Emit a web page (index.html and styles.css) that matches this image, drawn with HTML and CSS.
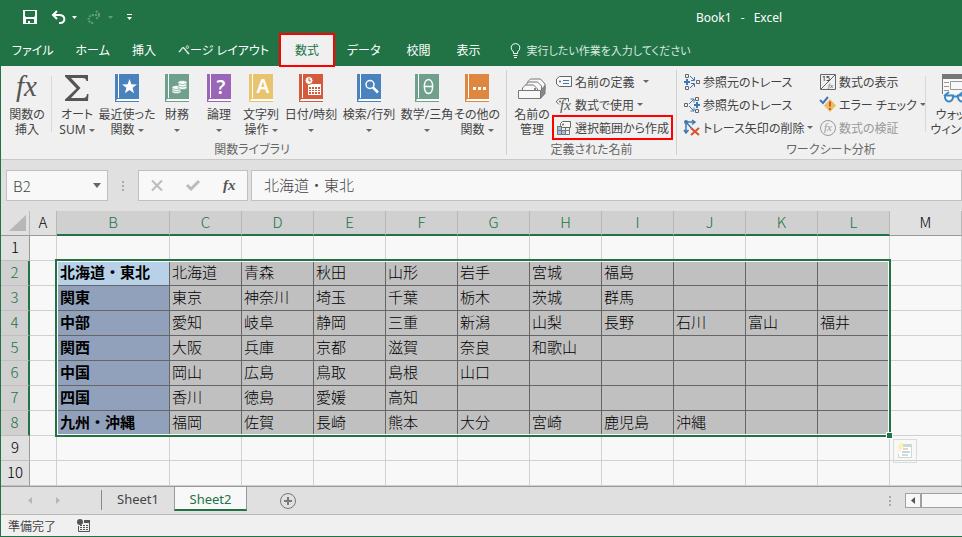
FILE: index.html
```html
<!DOCTYPE html>
<html lang="ja">
<head>
  <meta charset="UTF-8" />
  <meta name="viewport" content="width=device-width, initial-scale=1.0" />
  <title>Book1 - Excel</title>
  <link rel="stylesheet" href="styles.css">
</head>
<body>
<svg class="defs" width="0" height="0">
  <symbol id="book" viewBox="0 0 24 28">
    <path d="M0 0h24v25H0z" fill="currentColor"/>
    <path d="M3 0h1v24H3z" fill="#fff"/>
    <path d="M0 24v4h24v-1.500H2.500q-1.200-1 1-1.500H24V24z" fill="currentColor"/>
    <path d="M2 25h22v2H1z" fill="#fff"/>
  </symbol>
</svg>

<div class="window">
  <header class="titlebar">
    <div class="quick">
      <button aria-label="上書き保存"><svg width="14" height="14" viewBox="0 0 14 14"><path fill="#fff" fill-rule="evenodd" d="M0 0h14v14H0zM2 1v5l1 1h8l1-1V1zM3 9v4h2v-2h2v2h4V9z"/></svg></button>
      <button aria-label="元に戻す"><svg width="15" height="14" viewBox="0 0 15 14"><path fill="none" stroke="#fff" stroke-width="2" d="M6 1L2 5l4 4M2 5h6c7 0 7 8 1 8H8"/></svg></button>
      <button aria-label="元に戻す一覧"><svg width="5" height="3" viewBox="0 0 5 3"><path fill="#fff" d="M0 0h5L2.500 3z"/></svg></button>
      <button class="dim" aria-label="やり直し"><svg width="15" height="14" viewBox="0 0 15 14"><path fill="none" stroke="#fff" stroke-width="2" stroke-dasharray="2 1" d="M9 1l4 4-4 4M13 5H7c-7 0-7 8-1 8h1"/></svg></button>
      <button class="dim" aria-label="やり直し一覧"><svg width="5" height="3" viewBox="0 0 5 3"><path fill="#fff" d="M0 0h5L2.500 3z"/></svg></button>
      <button class="more" aria-label="カスタマイズ"><svg width="5" height="6" viewBox="0 0 5 6"><path fill="#fff" d="M0 0h5v1H0zM0 3h5L2.500 6z"/></svg></button>
    </div>
    <h1 class="title">Book1&ensp;&nbsp;-&ensp;&nbsp;Excel</h1>
  </header>

  <nav class="tabs">
    <a href="#">ファイル</a>
    <a href="#">ホーム</a>
    <a href="#">挿入</a>
    <a href="#">ページ レイアウト</a>
    <a href="#" class="active">数式</a>
    <a href="#">データ</a>
    <a href="#">校閲</a>
    <a href="#">表示</a>
    <a href="#" class="tell"><svg width="11" height="15" viewBox="0 0 11 15"><path fill="none" stroke="#fff" d="M3.500 10.500V9L1.500 6.500q-1.500-5 4-6 5.500 1 4 6L7.500 9v1.500zM3.500 12.500h4M4 14.500h3"/></svg>実行したい作業を入力してください</a>
  </nav>

  <section class="ribbon">
    <div class="group">
      <div class="tools">
        <button class="big"><svg width="26" height="28" viewBox="0 0 26 28"><text x="2" y="22" class="fx">fx</text></svg><span>関数の<br>挿入</span></button>
        <i class="rule"></i>
        <button class="big"><svg width="26" height="28" viewBox="0 0 26 28"><path fill="#555" d="M1 1h23v6h-1.500q-.5-3-4-3H7l9.500 10L7 24h12.500q3 0 3.500-4h1.500L24 27H1v-1.500L12.500 14.500 1 2.500z"/></svg><span>オート<br>SUM <b class="arrow"></b></span></button>
        <button class="big wide"><svg class="blue" width="24" height="28" viewBox="0 0 24 28"><use href="#book"/><path fill="#fff" d="M14.500 5l1.900 5.200 5.600.2-4.400 3.400 1.500 5.400-4.600-3.100-4.600 3.100 1.500-5.400L7 10.400l5.600-.2z"/></svg><span>最近使った<br>関数 <b class="arrow"></b></span></button>
        <button class="big"><svg class="green" width="24" height="28" viewBox="0 0 24 28"><use href="#book"/><g fill="#fff" stroke="#6fa08c" stroke-width=".7"><ellipse cx="11.500" cy="17.500" rx="4.500" ry="2"/><ellipse cx="11.500" cy="15.500" rx="4.500" ry="2"/><ellipse cx="11.500" cy="13.500" rx="4.500" ry="2"/><ellipse cx="17.500" cy="13.500" rx="4.500" ry="2"/><ellipse cx="17.500" cy="11" rx="4.500" ry="2"/><ellipse cx="17.500" cy="8.500" rx="4.500" ry="2"/></g></svg><span>財務<br><b class="arrow"></b></span></button>
        <button class="big"><svg class="purple" width="24" height="28" viewBox="0 0 24 28"><use href="#book"/><text x="14" y="20" class="glyph">?</text></svg><span>論理<br><b class="arrow"></b></span></button>
        <button class="big"><svg class="yellow" width="24" height="28" viewBox="0 0 24 28"><use href="#book"/><text x="14" y="19" class="glyph">A</text></svg><span>文字列<br>操作 <b class="arrow"></b></span></button>
        <button class="big wide"><svg class="red" width="24" height="28" viewBox="0 0 24 28"><use href="#book"/><path fill="#fff" d="M9 10h13v11H9z"/><path fill="#d35b3c" d="M10 13h2v2h-2zM13 13h2v2h-2zM16 13h2v2h-2zM19 13h2v2h-2zM10 16h2v1h-2zM13 16h2v1h-2zM16 16h2v1h-2zM19 16h2v1h-2zM10 18h2v2h-2zM13 18h2v2h-2zM16 18h2v2h-2zM19 18h2v2h-2z"/><circle cx="10" cy="6.500" r="4" fill="#fff" stroke="#d35b3c"/><path fill="none" stroke="#d35b3c" d="M10 4v3h2"/></svg><span>日付/時刻<br><b class="arrow"></b></span></button>
        <button class="big wide"><svg class="blue" width="24" height="28" viewBox="0 0 24 28"><use href="#book"/><circle cx="13" cy="10.500" r="4" fill="none" stroke="#fff" stroke-width="1.500"/><path stroke="#fff" stroke-width="2.500" d="M16 13.500l5 5"/></svg><span>検索/行列<br><b class="arrow"></b></span></button>
        <button class="big wide"><svg class="green" width="24" height="28" viewBox="0 0 24 28"><use href="#book"/><path fill="none" stroke="#fff" stroke-width="1.500" d="M13.500 5.500c-5.500 0-5.500 14 0 14s5.500-14 0-14zM9.500 12.500h8"/></svg><span>数学/三角<br><b class="arrow"></b></span></button>
        <button class="big"><svg class="orange" width="24" height="28" viewBox="0 0 24 28"><use href="#book"/><path fill="#fff" d="M8 13h3v3H8zM13 13h3v3h-3zM18 13h3v3h-3z"/></svg><span>その他の<br>関数 <b class="arrow"></b></span></button>
      </div>
      <div class="caption">関数ライブラリ</div>
    </div>

    <div class="group names">
      <div class="tools">
        <button class="big"><svg width="28" height="28" viewBox="0 0 28 28"><g fill="#f8f8f8" stroke="#777"><path d="M9.500 16V8l3-3h10l4.500 5v5l-4 4"/><path d="M7.500 17v-6l3-3h9l4 4v5"/><path d="M4.500 17v-3l3-3h8l4 4v3"/><path d="M.5 16.500h22v8H.5z"/><path fill="#888" d="M22.500 16.500l4.500-5v8l-4.500 5z"/></g><circle cx="17" cy="15" r="1" fill="#666"/></svg><span>名前の<br>管理</span></button>
        <div class="list">
          <button class="row"><svg width="16" height="16" viewBox="0 0 16 16"><path fill="#f8f8f8" stroke="#666" d="M3.500 2.500h12v10h-12L.5 10V5z"/><circle cx="4" cy="7.500" r="1" fill="#666"/><path stroke="#3e78b3" d="M7 6.500h6M7 9.500h6"/></svg>名前の定義<b class="arrow far"></b></button>
          <button class="row"><svg width="16" height="16" viewBox="0 0 16 16"><path fill="none" stroke="#666" d="M3 7.500L.5 5V4l3-2.500h9v3"/><circle cx="4" cy="4.500" r="1" fill="#666"/><text x="4" y="13" class="fx small">fx</text></svg>数式で使用<b class="arrow"></b></button>
          <button class="row marked"><svg width="16" height="16" viewBox="0 0 16 16"><path fill="#9dc3e6" d="M1 6h4v9H1zM5 11h4v4H5z"/><path fill="none" stroke="#777" d="M1.500 6.500h4M1.500 6v8.500h12V8M1 10.500h12M5.500 7v7M9.500 7v7"/><path fill="#f8f8f8" stroke="#666" d="M6.500 1.500h8v6h-8l-2-2v-2z"/><circle cx="7" cy="4.500" r="1" fill="#666"/></svg>選択範囲から作成</button>
        </div>
      </div>
      <div class="caption">定義された名前</div>
    </div>

    <div class="group audit">
      <div class="tools">
        <div class="list traces">
          <button class="row"><svg width="16" height="16" viewBox="0 0 16 16"><path fill="none" stroke="#666" d="M1.500.5h3v3h-3zM1.500 12.500h3v3h-3zM12.500 6.500h3v3h-3z"/><path fill="none" stroke="#3e78b3" stroke-width="2" d="M0 8h6M3 5v6"/><path fill="none" stroke="#3e78b3" d="M6 2l4 4M10.500 3v3.500H7M6 14l4-4M7 9.500h3.500V13"/></svg>参照元のトレース</button>
          <button class="row"><svg width="16" height="16" viewBox="0 0 16 16"><path fill="none" stroke="#666" d="M11.500.5h3v3h-3zM11.500 12.500h3v3h-3zM.5 6.500h3v3h-3z"/><path fill="none" stroke="#3e78b3" stroke-width="2" d="M10 8h6M13 5v6"/><path fill="none" stroke="#3e78b3" d="M5 7l5-5M6.500 2H10v3.500M5 9l5 5M10 10.500V14H6.500"/></svg>参照先のトレース</button>
          <button class="row"><svg width="16" height="16" viewBox="0 0 16 16"><path fill="none" stroke="#3e78b3" stroke-width="1.500" d="M2 2h8M8 0l3 2-3 2.500M2 2v10M0 10l2 3 2.500-3M2 2l8 9"/><circle cx="2" cy="2" r="2" fill="#3e78b3"/><path stroke="#d9532c" stroke-width="2" d="M7 8l8 7M15 8l-8 7"/></svg>トレース矢印の削除<b class="arrow"></b></button>
        </div>
        <div class="list checks">
          <button class="row"><svg width="16" height="16" viewBox="0 0 16 16"><path fill="none" stroke="#666" d="M.5.5h15v15H.5zM1 15L15 1"/><text x="2" y="7" class="tiny">15</text><text x="8" y="14" class="fx tiny">fx</text></svg>数式の表示</button>
          <button class="row"><svg width="16" height="16" viewBox="0 0 16 16"><path fill="#e9bf62" d="M10 2l6 6.500-6 6.500-6-6.500z"/><path stroke="#d9532c" stroke-width="2" d="M10 4.500v5M10 11v2"/><path fill="none" stroke="#3e78b3" stroke-width="2" d="M0 3l3 3 5-6"/></svg>エラー チェック<b class="arrow"></b></button>
          <button class="row" disabled><svg width="16" height="16" viewBox="0 0 16 16"><circle cx="8" cy="8" r="7.500" fill="none" stroke="#999"/><text x="4" y="11" class="fx mid">fx</text></svg>数式の検証</button>
        </div>
        <i class="rule"></i>
        <button class="big watch"><svg width="28" height="28" viewBox="0 0 28 28"><path fill="#f8f8f8" d="M0 0h28v20H0z"/><path fill="none" stroke="#777" d="M.5 20V.5h27V20"/><path fill="#777" d="M0 0h28v5H0z"/><path fill="none" stroke="#999" d="M2 8.500h5M2 12.500h5M2 16.500h5M8.500 7.500h12v8h-12zM22 8.500h4"/><path fill="#f8f8f8" stroke="#3e88c3" stroke-width="2" d="M3 21.500h8v2q-1 4-4 4t-4-4zM16 21.500h8v2q-1 4-4 4t-4-4zM11 22.500h5M2 22l5-4M16 22l5-4"/></svg><span>ウォッチ<br>ウィンドウ</span></button>
      </div>
      <div class="caption">ワークシート分析</div>
    </div>
  </section>

  <section class="formulabar">
    <div class="namebox">
      <input type="text" value="B2" aria-label="名前ボックス">
      <button aria-label="名前一覧"><svg width="8" height="5" viewBox="0 0 8 5"><path fill="#666" d="M0 0h8L4 5z"/></svg></button>
    </div>
    <i class="dots"></i>
    <div class="entry">
      <button aria-label="キャンセル"><svg width="12" height="11" viewBox="0 0 12 11"><path stroke="#bbb" stroke-width="2" d="M1 .5l10 10M11 .5l-10 10"/></svg></button>
      <button aria-label="入力"><svg width="14" height="11" viewBox="0 0 14 11"><path fill="none" stroke="#bbb" stroke-width="3" d="M1 5l4 4 8-8"/></svg></button>
      <button aria-label="関数の挿入"><svg width="14" height="14" viewBox="0 0 14 14"><text x="1" y="11" class="fx bold">fx</text></svg></button>
    </div>
    <input class="formula" type="text" value="北海道・東北" aria-label="数式バー">
  </section>

  <main class="sheet">
    <table>
      <colgroup><col class="c-num"><col class="c-a"><col class="c-b"><col class="c"><col class="c"><col class="c"><col class="c"><col class="c"><col class="c"><col class="c"><col class="c"><col class="c"><col class="c"><col></colgroup>
      <thead>
        <tr><th class="corner"><svg width="17" height="16" viewBox="0 0 17 16"><path fill="#b5b8b5" d="M17 0v16H0z"/></svg></th><th>A</th><th class="on">B</th><th class="on">C</th><th class="on">D</th><th class="on">E</th><th class="on">F</th><th class="on">G</th><th class="on">H</th><th class="on">I</th><th class="on">J</th><th class="on">K</th><th class="on">L</th><th>M</th></tr>
      </thead>
      <tbody>
        <tr><th>1</th><td></td><td></td><td></td><td></td><td></td><td></td><td></td><td></td><td></td><td></td><td></td><td></td><td></td></tr>
        <tr class="sel current"><th>2</th><td></td><td>北海道・東北</td><td>北海道</td><td>青森</td><td>秋田</td><td>山形</td><td>岩手</td><td>宮城</td><td>福島</td><td></td><td></td><td></td><td></td></tr>
        <tr class="sel"><th>3</th><td></td><td>関東</td><td>東京</td><td>神奈川</td><td>埼玉</td><td>千葉</td><td>栃木</td><td>茨城</td><td>群馬</td><td></td><td></td><td></td><td></td></tr>
        <tr class="sel"><th>4</th><td></td><td>中部</td><td>愛知</td><td>岐阜</td><td>静岡</td><td>三重</td><td>新潟</td><td>山梨</td><td>長野</td><td>石川</td><td>富山</td><td>福井</td><td></td></tr>
        <tr class="sel"><th>5</th><td></td><td>関西</td><td>大阪</td><td>兵庫</td><td>京都</td><td>滋賀</td><td>奈良</td><td>和歌山</td><td></td><td></td><td></td><td></td><td></td></tr>
        <tr class="sel"><th>6</th><td></td><td>中国</td><td>岡山</td><td>広島</td><td>鳥取</td><td>島根</td><td>山口</td><td></td><td></td><td></td><td></td><td></td><td></td></tr>
        <tr class="sel"><th>7</th><td></td><td>四国</td><td>香川</td><td>徳島</td><td>愛媛</td><td>高知</td><td></td><td></td><td></td><td></td><td></td><td></td><td></td></tr>
        <tr class="sel"><th>8</th><td></td><td>九州・沖縄</td><td>福岡</td><td>佐賀</td><td>長崎</td><td>熊本</td><td>大分</td><td>宮崎</td><td>鹿児島</td><td>沖縄</td><td></td><td></td><td></td></tr>
        <tr><th>9</th><td></td><td></td><td></td><td></td><td></td><td></td><td></td><td></td><td></td><td></td><td></td><td></td><td></td></tr>
        <tr><th>10</th><td></td><td></td><td></td><td></td><td></td><td></td><td></td><td></td><td></td><td></td><td></td><td></td><td></td></tr>
      </tbody>
    </table>
    <div class="selection"><i class="handle"></i></div>
    <button class="quick-analysis" aria-label="クイック分析"><svg width="16" height="16" viewBox="0 0 16 16"><path fill="#fff" stroke="#cbd9d0" d="M3.500 2.500h11v12h-13V11"/><path fill="#cbd9d0" d="M6 1h9v3H6z"/><path fill="#edd6b8" d="M6 5h5v2H6z"/><path fill="#bcd8ea" d="M5 8h8v2H5z"/><path fill="#d8d8d8" d="M5 11h6v2H5z"/><path fill="#faf0c0" d="M3 0h4L5 4h2L1 10l1-5H0z"/></svg></button>
  </main>

  <footer class="sheetbar">
    <div class="pager">
      <button aria-label="前のシート"><svg width="4" height="7" viewBox="0 0 4 7"><path fill="#b5b5b5" d="M4 0v7L0 3.500z"/></svg></button>
      <button aria-label="次のシート"><svg width="4" height="7" viewBox="0 0 4 7"><path fill="#b5b5b5" d="M0 0v7l4-3.500z"/></svg></button>
    </div>
    <a href="#" class="sheettab">Sheet1</a>
    <a href="#" class="sheettab active">Sheet2</a>
    <button class="add" aria-label="新しいシート"><svg width="16" height="16" viewBox="0 0 16 16"><circle cx="8" cy="8" r="7.500" fill="none" stroke="#777"/><path stroke="#777" stroke-width="2" d="M4 8h8M8 4v8"/></svg></button>
    <i class="dots"></i>
    <div class="scroll">
      <button aria-label="左へスクロール"><svg width="4" height="7" viewBox="0 0 4 7"><path fill="#555" d="M4 0v7L0 3.500z"/></svg></button>
      <span class="thumb"></span>
    </div>
  </footer>

  <div class="status">
    <span>準備完了</span>
    <svg width="13" height="13" viewBox="0 0 13 13"><circle cx="3" cy="3" r="3" fill="#555"/><path fill="#555" d="M7 1h6v3H7z"/><path fill="none" stroke="#555" d="M1.500 7v5.500h11V4"/><path stroke="#555" stroke-dasharray="2 1" d="M3 6.500h9M3 8.500h9M3 10.500h9"/></svg>
  </div>
</div>
</body>
</html>
```
FILE: styles.css
```css
* {
  box-sizing: border-box;
}

body {
  margin: 0;
  overflow: hidden;
  font-family: "Noto Sans", "Noto Sans CJK JP", sans-serif;
  font-size: 12px;
  font-feature-settings: "palt";
  color: #444;
}

button {
  display: flex;
  align-items: center;
  justify-content: center;
  margin: 0;
  padding: 0;
  border: 0;
  background: none;
  color: inherit;
  font: inherit;
  font-feature-settings: inherit;
  white-space: nowrap;
}

input {
  min-width: 0;
  padding: 0;
  border: 0;
  background: none;
  color: #444;
  font-family: "Noto Sans CJK JP", sans-serif;
  font-size: 15px;
  font-weight: 300;
}

a {
  color: inherit;
  text-decoration: none;
  white-space: nowrap;
}

svg {
  display: block;
  flex: none;
  overflow: visible;
}

.defs {
  position: absolute;
}

.window {
  border-left: 1px solid #217346;
  border-bottom: 1px solid #217346;
  background: #e0e0e0;
}

/* title bar */
.titlebar {
  display: flex;
  align-items: center;
  height: 34px;
  background: #217346;
  color: #fff;
}

.quick {
  display: flex;
  align-items: center;
  gap: 6px;
  width: 695px;
  padding-left: 22px;
}

.quick button:nth-child(2),
.quick button:nth-child(4) {
  margin-left: 8px;
}

.quick .dim {
  opacity: 0.3;
}

.quick .dim:nth-child(4) {
  margin-left: 4px;
}

.quick .more {
  margin-left: 8px;
}

.title {
  margin: 0;
  font-size: 12px;
  font-weight: 400;
}

.tabs {
  display: flex;
  height: 32px;
  background: #217346;
  color: #fff;
}

.tabs a {
  display: flex;
  align-items: center;
  padding: 0 11px;
}

.tabs a.active {
  position: relative;
  padding: 0 15px;
  background: #f0f0f0;
  color: #217346;
  outline: 2px solid #f00;
  outline-offset: -1px;
}

.tabs .active ~ a {
  padding: 0 13px;
}

.tabs .active ~ .tell {
  gap: 6px;
  padding-left: 16px;
  color: #dbe9e0;
  font-size: 11px;
}

/* ribbon */
.ribbon {
  display: flex;
  height: 94px;
  overflow: hidden;
  border-bottom: 1px solid #c8c8c8;
  background: #f0f0f0;
}

.group {
  display: flex;
  flex: none;
  flex-direction: column;
  margin: 4px 0;
  padding: 0 8px 0 5px;
  border-right: 1px solid #d0d0d0;
}

.names {
  width: 170px;
  padding: 0 4px;
}

.audit {
  width: 302px;
  padding: 0 0 0 7px;
}

.tools {
  display: flex;
  flex: none;
  align-items: flex-start;
  height: 73px;
}

.caption {
  line-height: 14px;
  text-align: center;
  color: #666;
}

.big {
  flex: none;
  flex-direction: column;
  justify-content: flex-start;
  gap: 5px;
  width: 42px;
  padding-top: 4px;
  line-height: 15px;
}

.wide {
  width: 58px;
}

.watch {
  width: 52px;
}

.rule {
  flex: none;
  width: 1px;
  height: 56px;
  margin: 6px 4px 0 3px;
  background: #d8d8d8;
}

.arrow {
  display: inline-block;
  vertical-align: middle;
  border: 3px solid transparent;
  border-top-color: #666;
  border-bottom: 0;
}

.far {
  margin-left: 5px;
}

.blue { color: #4a82bd; }
.green { color: #6fa08c; }
.purple { color: #9966b8; }
.yellow { color: #e8c46e; }
.red { color: #d35b3c; }
.orange { color: #e0873f; }

.glyph {
  fill: #fff;
  font-size: 19px;
  font-weight: 600;
  text-anchor: middle;
}

.fx {
  fill: #555;
  font-family: "Liberation Serif", serif;
  font-size: 29px;
  font-style: italic;
}

.fx.small { font-size: 15px; }
.fx.mid { font-size: 11px; fill: #999; }
.fx.bold { font-size: 15px; font-weight: 700; }
.tiny,
.fx.tiny { font-size: 7px; }

.list {
  display: flex;
  flex: none;
  flex-direction: column;
  align-items: flex-start;
}

.row {
  gap: 3px;
  height: 23px;
  padding: 0 3px;
}

.traces {
  width: 136px;
}

.traces .row,
.checks .row {
  padding: 0;
}

.checks {
  width: 102px;
}

.marked {
  outline: 2px solid #f00;
  outline-offset: -1px;
}

.row:disabled {
  color: #999;
}

/* formula bar */
.formulabar {
  display: flex;
  align-items: center;
  height: 51px;
  padding-left: 5px;
}

.namebox,
.entry,
.formula {
  height: 31px;
  border: 1px solid #c0c0c0;
  background: #f8f8f8;
}

.namebox {
  display: flex;
  width: 102px;
  padding: 0 6px;
}

.namebox input {
  flex: 1;
}

.dots {
  width: 2px;
  height: 10px;
  margin: 0 14px;
  background: repeating-linear-gradient(#aaa 0 2px, transparent 2px 4px);
}

.entry {
  display: flex;
  width: 110px;
  margin-right: 3px;
}

.entry button {
  flex: 1;
}

.formula {
  flex: 1;
  padding: 0 0 2px 12px;
}

/* sheet */
.sheet {
  position: relative;
  background: #f8f8f8;
}

table {
  width: 100%;
  table-layout: fixed;
  border-collapse: separate;
  border-spacing: 0;
  font-family: "Noto Sans CJK JP", sans-serif;
  font-size: 15px;
  font-feature-settings: normal;
  line-height: 22px;
}

.c-num { width: 29px; }
.c-a { width: 27px; }
.c-b { width: 113px; }
.c { width: 72px; }

th,
td {
  height: 25px;
  padding: 0 2px 2px;
  border-right: 1px solid #d0d0d0;
  border-bottom: 1px solid #d0d0d0;
  text-align: left;
  white-space: nowrap;
  color: #000;
}

th {
  padding: 0 0 2px;
  background: #e0e0e0;
  text-align: center;
  font-weight: 300;
}

thead th {
  border-color: #b8b8b8;
  border-bottom-color: #999;
}

tbody th {
  border-right-color: #999;
  border-bottom-color: #c0c0c0;
}

thead .on {
  padding-bottom: 1px;
  border-bottom: 2px solid #217346;
  background: #d0d0d0;
  color: #217346;
}

.corner svg {
  margin: 2px 0 0 8px;
}

.sel th {
  border-right: 2px solid #217346;
  background: #d0d0d0;
  color: #217346;
}

.sel td {
  border-color: #666;
  background: #c0c0c0;
  font-weight: 300;
}

.sel td:nth-child(2),
.sel td:last-child {
  border-color: #d0d0d0;
  background: none;
}

.sel td:nth-child(3) {
  padding-left: 3px;
  background: #91a1bb;
  font-weight: 700;
}

.current td:nth-child(3) {
  background: #b8d0e8;
}

.selection {
  position: absolute;
  top: 48px;
  left: 54px;
  width: 836px;
  height: 178px;
  border: 2px solid #217346;
  box-shadow: inset 0 0 0 1px #fff;
}

.handle {
  position: absolute;
  right: -4px;
  bottom: -4px;
  width: 7px;
  height: 7px;
  border: 1px solid #fff;
  background: #217346;
}

.quick-analysis {
  position: absolute;
  top: 228px;
  left: 892px;
  width: 24px;
  height: 24px;
  border: 1px solid #d3e0d8;
}

/* sheet tabs */
.sheetbar {
  display: flex;
  height: 29px;
  border-top: 1px solid #999;
  border-bottom: 1px solid #b8b8b0;
  font-size: 13px;
}

.pager {
  display: flex;
  gap: 24px;
  width: 101px;
  height: 20px;
  margin-top: 3px;
  padding-left: 27px;
  border-right: 1px solid #888;
}

.sheettab {
  width: 72px;
  height: 24px;
  line-height: 25px;
  text-align: center;
}

.sheettab.active {
  width: 73px;
  border: solid #999;
  border-width: 0 1px;
  border-bottom: 2px solid #217346;
  background: #f8f8f8;
  color: #217346;
}

.add {
  margin-left: 33px;
}

.sheetbar .dots {
  margin: 9px 14px 0 auto;
}

.scroll {
  display: flex;
  width: 57px;
  height: 15px;
  margin-top: 6px;
  border: 1px solid #a0a0a0;
  border-right: 0;
  background: #f8f8f8;
}

.scroll button {
  width: 14px;
}

.thumb {
  flex: 1;
  border-left: 2px solid #a0a0a0;
}

.status {
  display: flex;
  align-items: center;
  gap: 21px;
  height: 21px;
  padding-left: 7px;
  background: #f0f0f0;
}
```
